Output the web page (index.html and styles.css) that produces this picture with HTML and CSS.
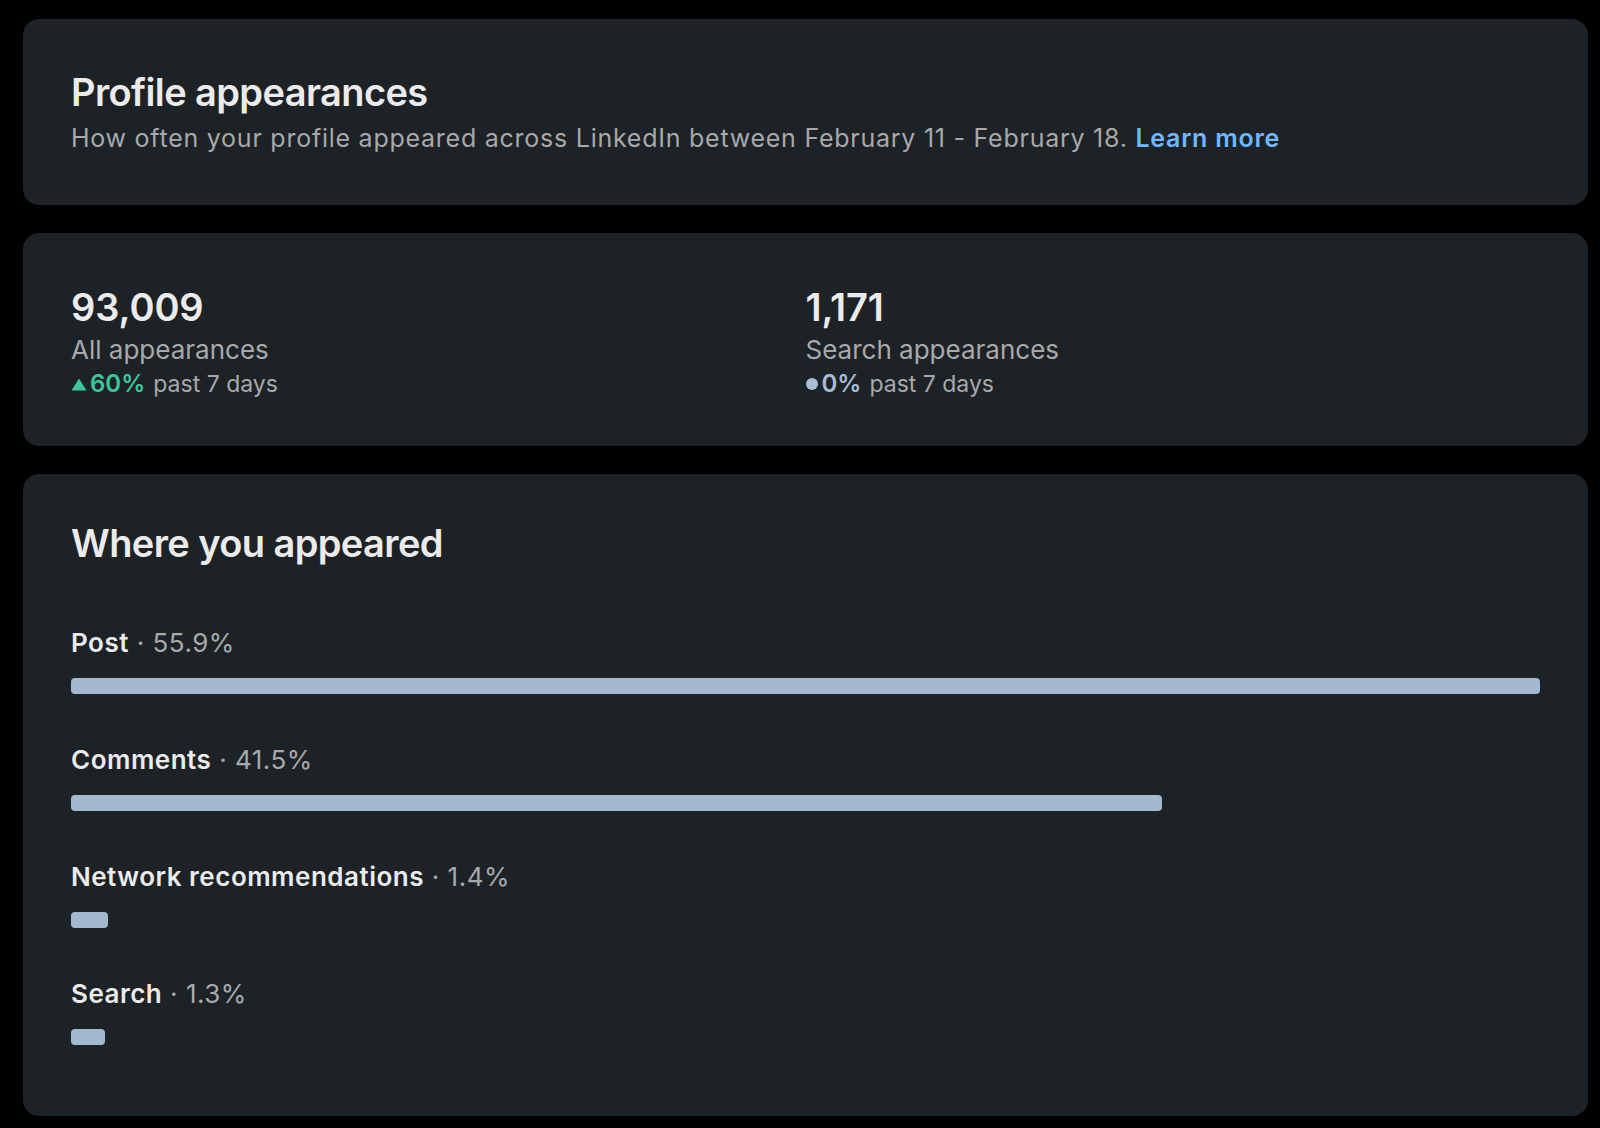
FILE: index.html
```html
<!DOCTYPE html>
<html lang="en">
<head>
    <meta charset="UTF-8">
    <meta name="viewport" content="width=device-width, initial-scale=1.0">
    <title>Profile appearances</title>
    <link rel="stylesheet" href="styles.css">
</head>
<body>
    <section class="card intro">
        <h1>Profile appearances</h1>
        <p class="subtitle">How often your profile appeared across LinkedIn between February 11 - February 18. <a href="#" class="link">Learn more</a></p>
    </section>

    <section class="card stats">
        <div class="stat">
            <div class="stat-number">93,009</div>
            <div class="stat-label">All appearances</div>
            <div class="trend">
                <svg class="trend-icon" width="16" height="13" viewBox="0 0 16 13"><path d="M8 0.5L15.5 12.5H0.5Z" fill="#3cc69a"/></svg>
                <span class="trend-up">60%</span> past 7 days
            </div>
        </div>
        <div class="stat">
            <div class="stat-number">1,171</div>
            <div class="stat-label">Search appearances</div>
            <div class="trend">
                <span class="trend-dot"></span>
                <span class="trend-flat">0%</span> past 7 days
            </div>
        </div>
    </section>

    <section class="card where">
        <h2>Where you appeared</h2>
        <div class="rows">
            <div class="row">
                <div class="row-label"><strong>Post</strong> · 55.9%</div>
                <div class="bar" style="width: 100%"></div>
            </div>
            <div class="row">
                <div class="row-label"><strong>Comments</strong> · 41.5%</div>
                <div class="bar" style="width: 74.24%"></div>
            </div>
            <div class="row">
                <div class="row-label"><strong>Network recommendations</strong> · 1.4%</div>
                <div class="bar" style="width: 2.5%"></div>
            </div>
            <div class="row">
                <div class="row-label"><strong>Search</strong> · 1.3%</div>
                <div class="bar" style="width: 2.3%"></div>
            </div>
        </div>
    </section>
</body>
</html>
```

FILE: styles.css
```css
body {
    margin: 0;
    padding: 19px 12px 0 23px;
    background-color: #000000;
    color: rgba(255, 255, 255, 0.9);
    font-family: Inter, "Noto Sans", sans-serif;
    overflow: hidden;
}

.card {
    background-color: #1d2226;
    border-radius: 16px;
    margin-bottom: 28px;
}

h1, h2 {
    margin: 0;
    font-size: 38px;
    line-height: 48px;
    font-weight: 600;
    letter-spacing: -0.6px;
    color: #ebebeb;
}

.intro {
    padding: 49px 48px 51px;
}

.subtitle {
    margin: 6px 0 0;
    font-size: 25px;
    line-height: 32px;
    letter-spacing: 0.75px;
    color: #a8a9aa;
}

.link {
    color: #71b7fb;
    font-weight: 600;
    text-decoration: none;
}

.stats {
    display: grid;
    grid-template-columns: 1fr 1fr;
    padding: 50px 48px 48px;
}

.stat-number {
    font-size: 38px;
    line-height: 48px;
    font-weight: 600;
    letter-spacing: -0.1px;
    color: #ebebeb;
}

.stat-label {
    margin-top: 2px;
    font-size: 26px;
    line-height: 34px;
    color: #a8a9aa;
}

.trend {
    display: flex;
    align-items: center;
    margin-top: 3px;
    font-size: 23px;
    line-height: 28px;
    color: #a8a9aa;
}

.trend-icon {
    margin-right: 3px;
}

.trend-up {
    color: #3cc69a;
    font-weight: 600;
    font-size: 24px;
    margin-right: 8px;
}

.trend-dot {
    width: 12px;
    height: 12px;
    border-radius: 50%;
    background-color: #a9bdd4;
    margin-right: 4px;
}

.trend-flat {
    color: #a9bdd4;
    font-weight: 600;
    font-size: 24px;
    margin-right: 8px;
}

.where {
    padding: 45px 48px 21px;
}

.rows {
    margin-top: 60px;
}

.row {
    padding-bottom: 50px;
}

.row-label {
    font-size: 26px;
    line-height: 32px;
    letter-spacing: 0.5px;
    color: #a8a9aa;
}

.row-label strong {
    color: #ebebeb;
    font-weight: 600;
}

.bar {
    height: 16px;
    margin-top: 19px;
    border-radius: 4px;
    background-color: #a3b9cf;
}
```
